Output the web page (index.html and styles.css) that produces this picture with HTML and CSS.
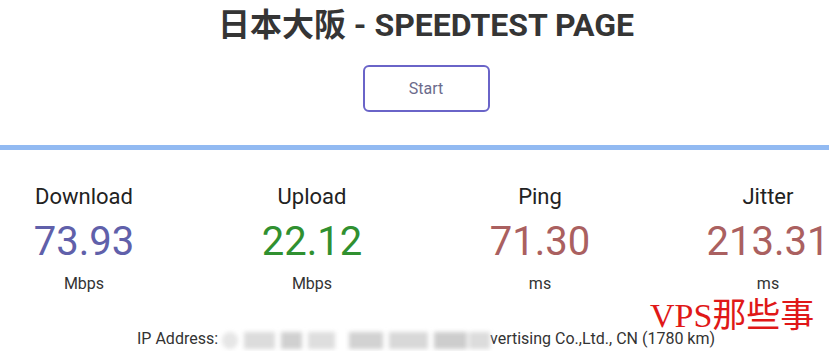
FILE: index.html
```html
<!DOCTYPE html>
<html>
<head>
<meta charset="utf-8">
<title>日本大阪 - SPEEDTEST PAGE</title>
<link rel="stylesheet" href="styles.css">
</head>
<body>
  <div class="page">
    <h1 class="title">日本大阪 - SPEEDTEST PAGE</h1>
    <div class="start-row">
      <button class="start-btn">Start</button>
    </div>
    <div class="divider"></div>
    <div class="test-group">
      <div class="test-area">
        <div class="test-name">Download</div>
        <div class="meter dl">73.93</div>
        <div class="unit">Mbps</div>
      </div>
      <div class="test-area">
        <div class="test-name">Upload</div>
        <div class="meter ul">22.12</div>
        <div class="unit">Mbps</div>
      </div>
      <div class="test-area">
        <div class="test-name">Ping</div>
        <div class="meter ping">71.30</div>
        <div class="unit">ms</div>
      </div>
      <div class="test-area">
        <div class="test-name">Jitter</div>
        <div class="meter jitter">213.31</div>
        <div class="unit">ms</div>
      </div>
    </div>
    <div class="ip-row">
      <span>IP Address: </span><span class="blur">
        <i class="b1"></i><i class="b2"></i><i class="b3"></i><i class="b4"></i><i class="b5"></i><i class="b6"></i><i class="b7"></i><i class="b8"></i>
      </span><span>vertising Co.,Ltd., CN (1780 km)</span>
    </div>
  </div>
  <div class="watermark">VPS那些事</div>
</body>
</html>
```

FILE: styles.css
```css
body {
    margin: 0;
    background: #fff;
    font-family: Roboto, "Noto Sans CJK SC", sans-serif;
    overflow: hidden;
    height: 351px;
    position: relative;
}

.page {
    width: 852px;
}

.title {
    margin: 0;
    padding-top: 4px;
    height: 42px;
    text-align: center;
    font-size: 32px;
    font-weight: 700;
    line-height: 42px;
    color: #353535;
}

.start-row {
    display: flex;
    justify-content: center;
    padding-top: 19px;
}

.start-btn {
    width: 127px;
    height: 47px;
    border: 2px solid #6a64c8;
    border-radius: 6px;
    background: #fff;
    color: #6b6b8c;
    font-family: Roboto, sans-serif;
    font-size: 16px;
}

.divider {
    margin-top: 33px;
    width: 829px;
    height: 5px;
    background: #92baf2;
}

.test-group {
    display: flex;
    justify-content: center;
    padding-top: 34px;
}

.test-area {
    flex: 0 0 228px;
    text-align: center;
}

.test-name {
    font-size: 22px;
    line-height: 26px;
    color: #222;
}

.meter {
    font-size: 40px;
    line-height: 48px;
    margin-top: 8px;
}

.dl { color: #6060aa; }
.ul { color: #309030; }
.ping, .jitter { color: #aa6060; }

.unit {
    margin-top: 9px;
    font-size: 16px;
    line-height: 18px;
    color: #333;
}

.ip-row {
    margin-top: 36px;
    padding-left: 137px;
    display: flex;
    font-size: 16px;
    line-height: 20px;
    color: #333;
    white-space: pre;
}

.blur {
    display: flex;
    width: 268px;
    height: 20px;
    filter: blur(2px);
}

.blur i {
    display: block;
    height: 17px;
    margin-top: 3px;
}

.b1 { width: 16px; background: #e6e6e6; border-radius: 8px; }
.b2 { width: 32px; background: #dcdcdc; margin-left: 6px; }
.b3 { width: 22px; background: #d0d0d0; margin-left: 6px; }
.b4 { width: 28px; background: #dedede; margin-left: 6px; }
.b5 { width: 34px; background: #d2d2d2; margin-left: 14px; }
.b6 { width: 40px; background: #d8d8d8; margin-left: 6px; }
.b7 { width: 34px; background: #cdcdcd; margin-left: 6px; }
.b8 { width: 22px; background: #dcdcdc; margin-left: 2px; }

.watermark {
    position: absolute;
    left: 650px;
    top: 299px;
    font-family: "Liberation Serif", "Noto Sans CJK SC", serif;
    font-size: 34px;
    line-height: 34px;
    color: #e01818;
}
```
